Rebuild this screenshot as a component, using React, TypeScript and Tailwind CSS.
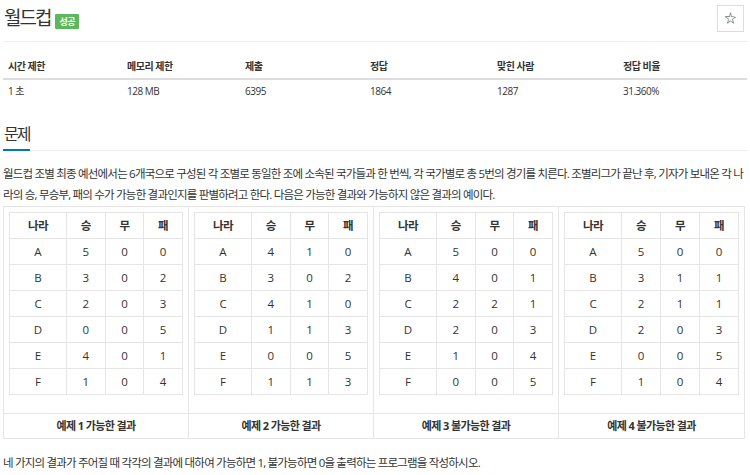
import React from "react";

type Row = [string, number, number, number];

const examples: { title: string; rows: Row[] }[] = [
  {
    title: "예제 1 가능한 결과",
    rows: [["A", 5, 0, 0], ["B", 3, 0, 2], ["C", 2, 0, 3], ["D", 0, 0, 5], ["E", 4, 0, 1], ["F", 1, 0, 4]],
  },
  {
    title: "예제 2 가능한 결과",
    rows: [["A", 4, 1, 0], ["B", 3, 0, 2], ["C", 4, 1, 0], ["D", 1, 1, 3], ["E", 0, 0, 5], ["F", 1, 1, 3]],
  },
  {
    title: "예제 3 불가능한 결과",
    rows: [["A", 5, 0, 0], ["B", 4, 0, 1], ["C", 2, 2, 1], ["D", 2, 0, 3], ["E", 1, 0, 4], ["F", 0, 0, 5]],
  },
  {
    title: "예제 4 불가능한 결과",
    rows: [["A", 5, 0, 0], ["B", 3, 1, 1], ["C", 2, 1, 1], ["D", 2, 0, 3], ["E", 0, 0, 5], ["F", 1, 0, 4]],
  },
];

const stats = [
  ["시간 제한", "1 초"],
  ["메모리 제한", "128 MB"],
  ["제출", "6395"],
  ["정답", "1864"],
  ["맞힌 사람", "1287"],
  ["정답 비율", "31.360%"],
];

function ResultTable({ rows }: { rows: Row[] }) {
  return (
    <table className="w-full border-collapse table-fixed text-[11.5px] text-[#333]">
      <colgroup>
        <col className="w-[57px]" />
        <col />
        <col />
        <col />
      </colgroup>
      <thead>
        <tr className="h-[26px]">
          {["나라", "승", "무", "패"].map((h) => (
            <th key={h} className="border border-[#e5e5e5] font-bold text-center tracking-[-0.5px]">
              {h}
            </th>
          ))}
        </tr>
      </thead>
      <tbody>
        {rows.map((r) => (
          <tr key={r[0]} className="h-[26px]">
            {r.map((c, i) => (
              <td key={i} className="border border-[#e5e5e5] text-center">
                {c}
              </td>
            ))}
          </tr>
        ))}
      </tbody>
    </table>
  );
}

export default function App() {
  return (
    <div
      className="w-[750px] h-[475px] overflow-hidden bg-white text-[#333]"
      style={{ fontFamily: '"Open Sans", "Noto Sans CJK KR", sans-serif' }}
    >
      {/* Title */}
      <div className="flex items-start justify-between pl-[4px] pr-[5px] pt-[5px]">
        <div className="flex items-center gap-[5px] h-[26px]">
          <h1 className="text-[19px] leading-none text-[#333] tracking-[-2px]">월드컵</h1>
          <span className="mt-[6px] bg-[#5cb85c] text-white text-[9px] font-bold px-[4px] py-[3px] leading-none rounded-[1px] tracking-[-0.5px]">
            성공
          </span>
        </div>
        <button className="w-[27px] h-[27px] mr-px border border-[#ddd] bg-white flex items-center justify-center text-[12px] text-[#333]">
          ☆
        </button>
      </div>
      <div className="mx-[3px] mt-[9px] border-t border-[#eee]" />

      {/* Stats */}
      <div className="mx-[3px] mt-[13px] text-[10px] tracking-[-0.5px]">
        <div className="grid grid-cols-[119px_118px_125px_127px_126px_1fr] border-b-2 border-[#ddd] h-[25px] items-center font-bold">
          {stats.map(([h]) => (
            <div key={h} className="pl-[5px]">
              {h}
            </div>
          ))}
        </div>
        <div className="grid grid-cols-[119px_118px_125px_127px_126px_1fr] h-[22px] items-center">
          {stats.map(([h, v]) => (
            <div key={h} className="pl-[5px]">
              {v}
            </div>
          ))}
        </div>
      </div>

      {/* Section heading */}
      <div className="mx-[3px] mt-[20px] border-b border-[#eee]">
        <h2 className="text-[16px] leading-[22px] pb-[4px] pl-[1px] pr-[1px] inline-block border-b-2 border-[#0076c0] -mb-px tracking-[-2px]">
          문제
        </h2>
      </div>

      <p className="mx-[3px] mt-[12px] text-[11.5px] leading-[21px] tracking-[-0.8px] text-[#333]">
        월드컵 조별 최종 예선에서는 6개국으로 구성된 각 조별로 동일한 조에 소속된 국가들과 한 번씩, 각 국가별로 총 5번의 경기를 치른다. 조별리그가 끝난 후, 기자가 보내온 각 나라의 승, 무승부, 패의 수가 가능한 결과인지를 판별하려고 한다. 다음은 가능한 결과와 가능하지 않은 결과의 예이다.
      </p>

      {/* Examples */}
      <div className="mx-[3px] mt-[1px] w-[742px] border border-[#e5e5e5] grid grid-cols-4">
        {examples.map((ex, i) => (
          <div key={ex.title} className={`flex flex-col ${i < 3 ? "border-r border-[#e5e5e5]" : ""}`}>
            <div className="px-[5px] pt-[5px] pb-[18px]">
              <ResultTable rows={ex.rows} />
            </div>
            <div className="border-t border-[#e5e5e5] h-[25px] flex items-center justify-center text-[11px] font-bold tracking-[-0.6px]">
              {ex.title}
            </div>
          </div>
        ))}
      </div>

      <p className="mx-[3px] mt-[13px] text-[11.5px] leading-[21px] tracking-[-0.8px]">
        네 가지의 결과가 주어질 때 각각의 결과에 대하여 가능하면 1, 불가능하면 0을 출력하는 프로그램을 작성하시오.
      </p>
    </div>
  );
}
